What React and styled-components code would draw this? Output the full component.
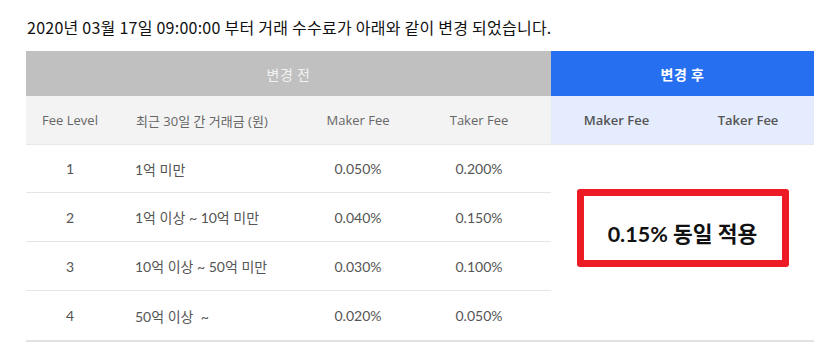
import React from "react";
import styled, { createGlobalStyle } from "styled-components";

const GlobalStyle = createGlobalStyle`
  body {
    margin: 0;
    background: #fff;
    font-family: Lato, "Noto Sans CJK KR", sans-serif;
  }
`;

const rows = [
  { level: 1, range: "1억 미만", maker: "0.050%", taker: "0.200%" },
  { level: 2, range: "1억 이상 ~ 10억 미만", maker: "0.040%", taker: "0.150%" },
  { level: 3, range: "10억 이상 ~ 50억 미만", maker: "0.030%", taker: "0.100%" },
  { level: 4, range: "50억 이상  ~", maker: "0.020%", taker: "0.050%" },
];

function App() {
  return (
    <Page>
      <GlobalStyle />
      <Notice>2020년 03월 17일 09:00:00 부터 거래 수수료가 아래와 같이 변경 되었습니다.</Notice>
      <Table>
        <GroupHead $tone="before">변경 전</GroupHead>
        <GroupHead $tone="after">변경 후</GroupHead>

        <ColHead>Fee Level</ColHead>
        <ColHead $left>최근 30일 간 거래금 (원)</ColHead>
        <ColHead>Maker Fee</ColHead>
        <ColHead $shift>Taker Fee</ColHead>
        <ColHead $after>Maker Fee</ColHead>
        <ColHead $after>Taker Fee</ColHead>

        {rows.map((r, i) => (
          <React.Fragment key={r.level}>
            <Cell $row={i + 3} $col={1}>{r.level}</Cell>
            <Cell $row={i + 3} $col={2} $left>{r.range}</Cell>
            <Cell $row={i + 3} $col={3}>{r.maker}</Cell>
            <Cell $row={i + 3} $col={4} $shift>{r.taker}</Cell>
          </React.Fragment>
        ))}

        <AfterCell>
          <Stamp>0.15% 동일 적용</Stamp>
        </AfterCell>
      </Table>
    </Page>
  );
}

export default App;

const Page = styled.div`
  padding: 17px 0 0 26px;
  width: 788px;
`;

const Notice = styled.p`
  margin: 0 0 14px 1px;
  font-family: "Noto Sans CJK KR", sans-serif;
  font-size: 16px;
  line-height: 20px;
  color: #111;
  letter-spacing: 0.25px;
  white-space: nowrap;
`;

const Table = styled.div`
  display: grid;
  grid-template-columns: 88px 183px 122px 132px 131px 132px;
  grid-template-rows: 45px 49px 48px 49px 49px 49px;
  border-bottom: 2px solid #e2e2e2;
`;

const GroupHead = styled.div`
  grid-row: 1;
  grid-column: ${(p) => (p.$tone === "after" ? "5 / 7" : "1 / 5")};
  display: flex;
  align-items: center;
  justify-content: center;
  font-family: "Noto Sans CJK KR", sans-serif;
  font-size: 14px;
  font-weight: ${(p) => (p.$tone === "after" ? 700 : 400)};
  color: ${(p) => (p.$tone === "after" ? "#fff" : "#f2f2f2")};
  background: ${(p) => (p.$tone === "after" ? "#266ff0" : "#c0c0c0")};
  letter-spacing: 0.5px;
`;

const ColHead = styled.div`
  grid-row: 2;
  display: flex;
  align-items: center;
  justify-content: ${(p) => (p.$left ? "flex-start" : "center")};
  padding-left: ${(p) => (p.$left ? "22px" : "0")};
  padding-right: ${(p) => (p.$shift ? "12px" : "0")};
  background: ${(p) => (p.$after ? "#e4ecfd" : "#f3f3f3")};
  border-bottom: 1px solid #e8e8e8;
  font-family: "Open Sans", "Noto Sans CJK KR", sans-serif;
  font-size: 13px;
  font-weight: ${(p) => (p.$after ? 600 : 400)};
  color: ${(p) => (p.$after ? "#555" : "#666")};
`;

const Cell = styled.div`
  grid-row: ${(p) => p.$row};
  grid-column: ${(p) => p.$col};
  display: flex;
  align-items: center;
  justify-content: ${(p) => (p.$left ? "flex-start" : "center")};
  padding-left: ${(p) => (p.$left ? "21px" : "0")};
  padding-right: ${(p) => (p.$shift ? "12px" : "0")};
  border-bottom: ${(p) => (p.$row === 6 ? "none" : "1px solid #e6e6e6")};
  font-size: 14px;
  color: #555;
  white-space: pre;
`;

const AfterCell = styled.div`
  grid-row: 3 / 7;
  grid-column: 5 / 7;
  display: flex;
  justify-content: center;
  align-items: flex-start;
  padding-top: 44px;
`;

const Stamp = styled.div`
  width: 198px;
  height: 50px;
  padding-top: 14px;
  box-sizing: content-box;
  border: 7px solid #ed1c24;
  border-radius: 3px;
  display: flex;
  align-items: center;
  justify-content: center;
  font-family: Lato, "Noto Sans CJK KR", sans-serif;
  font-size: 21.5px;
  font-weight: 700;
  color: #111;
  line-height: 1;
`;
